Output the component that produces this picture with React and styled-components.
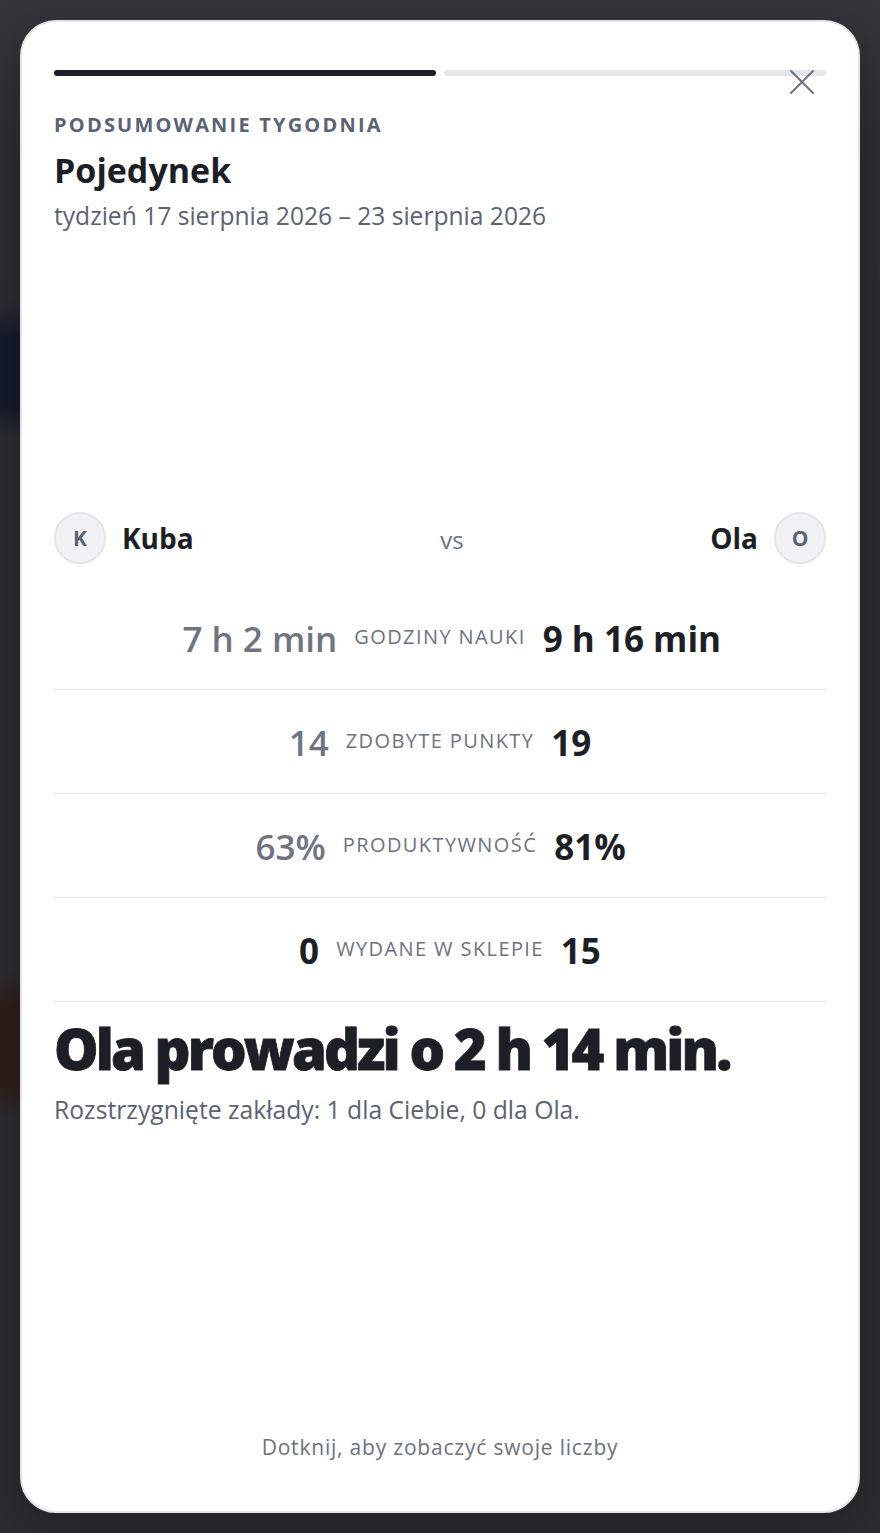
import React from 'react'
import styled, { createGlobalStyle } from 'styled-components'

const GlobalStyle = createGlobalStyle`
  html, body {
    margin: 0;
    padding: 0;
  }
  body {
    font-family: "Open Sans", "Noto Sans", "Liberation Sans", sans-serif;
    color: #1c1f26;
    background:
      linear-gradient(
        to bottom,
        transparent 300px,
        #151a2b 340px,
        #151a2b 405px,
        transparent 440px,
        transparent 970px,
        #2e1e1b 1005px,
        #2e1e1b 1085px,
        transparent 1120px
      ) left top / 20px 100% no-repeat,
      linear-gradient(to bottom, #34363b 0, #2b2d32 160px, #2a2c31 100%);
    min-height: 100vh;
  }
`

const Page = styled.div`
  padding: 20px;
`

const Card = styled.section`
  position: relative;
  box-sizing: border-box;
  width: 840px;
  height: 1493px;
  padding: 48px 32px 50px;
  display: flex;
  flex-direction: column;
  background: #fff;
  border: 2px solid #e3e5ea;
  border-radius: 36px;
  box-shadow: 0 10px 40px rgba(0, 0, 0, 0.25);
`

const Progress = styled.div`
  display: grid;
  grid-template-columns: 1fr 1fr;
  gap: 8px;
`

const Segment = styled.div`
  height: 6px;
  border-radius: 3px;
  background: ${p => (p.$done ? '#1d2027' : '#e4e6ea')};
`

const CloseButton = styled.button`
  position: absolute;
  top: 46px;
  right: 42px;
  width: 28px;
  height: 28px;
  padding: 0;
  border: 0;
  background: transparent;
  color: #6b7280;
  cursor: pointer;
  svg {
    display: block;
  }
`

const Eyebrow = styled.div`
  margin-top: 36px;
  font-size: 20px;
  line-height: 26px;
  font-weight: 700;
  letter-spacing: 2.2px;
  text-transform: uppercase;
  color: #5a6372;
`

const Title = styled.h1`
  margin: 11px 0 0;
  font-size: 34px;
  line-height: 42px;
  font-weight: 700;
  color: #1c1f26;
`

const Dates = styled.div`
  margin-top: 9px;
  font-size: 24.6px;
  line-height: 32px;
  color: #5a6372;
`

const Players = styled.div`
  margin-top: 280px;
  display: flex;
  align-items: center;
  justify-content: space-between;
`

const Player = styled.div`
  display: flex;
  align-items: center;
  gap: 16px;
  flex-direction: ${p => (p.$right ? 'row-reverse' : 'row')};
`

const Avatar = styled.div`
  box-sizing: border-box;
  width: 52px;
  height: 52px;
  border-radius: 50%;
  background: #f1f2f5;
  border: 2px solid #e3e5ea;
  display: flex;
  align-items: center;
  justify-content: center;
  font-size: 21px;
  font-weight: 700;
  color: #5a6372;
`

const Name = styled.span`
  font-size: 28px;
  line-height: 36px;
  font-weight: 700;
  color: #1c1f26;
`

const Versus = styled.span`
  font-size: 24px;
  color: #6b7280;
  padding-top: 2px;
`

const Stats = styled.div`
  margin-top: 22px;
`

const StatRow = styled.div`
  display: grid;
  grid-template-columns: 1fr auto 1fr;
  align-items: center;
  column-gap: 17px;
  padding: 31px 0 28px;
  border-bottom: 1px solid #e4e6ea;
`

const Value = styled.span`
  font-size: 35px;
  line-height: 44px;
  font-weight: ${p => (p.$muted ? 600 : 700)};
  color: ${p => (p.$muted ? '#6e7582' : '#1c1f26')};
  text-align: ${p => (p.$align === 'right' ? 'right' : 'left')};
  white-space: nowrap;
`

const Label = styled.span`
  font-size: 20px;
  line-height: 24px;
  letter-spacing: 1.4px;
  text-transform: uppercase;
  color: #6b7280;
  padding-bottom: 4px;
  white-space: nowrap;
`

const Verdict = styled.h2`
  margin: 14px 0 0;
  font-size: 56px;
  line-height: 64px;
  font-weight: 800;
  letter-spacing: -2.9px;
  -webkit-text-stroke: 0.8px #1c1f26;
  color: #1c1f26;
`

const Bets = styled.p`
  margin: 14px 0 0;
  font-size: 24.7px;
  line-height: 32px;
  color: #5a6372;
`

const Hint = styled.div`
  margin-top: auto;
  text-align: center;
  font-size: 21px;
  line-height: 28px;
  letter-spacing: 0.8px;
  color: #6b7280;
`

const stats = [
  { label: 'Godziny nauki', me: '7 h 2 min', them: '9 h 16 min', meMuted: true },
  { label: 'Zdobyte punkty', me: '14', them: '19', meMuted: true },
  { label: 'Produktywność', me: '63%', them: '81%', meMuted: true },
  { label: 'Wydane w sklepie', me: '0', them: '15', meMuted: false },
]

function CloseIcon() {
  return (
    <svg width="28" height="28" viewBox="0 0 28 28" fill="none" stroke="currentColor" strokeWidth="2" strokeLinecap="round">
      <path d="M3 3l22 22M25 3L3 25" />
    </svg>
  )
}

export default function App() {
  return (
    <Page>
      <GlobalStyle />
      <Card>
        <Progress>
          <Segment $done />
          <Segment />
        </Progress>
        <CloseButton aria-label="Zamknij">
          <CloseIcon />
        </CloseButton>

        <Eyebrow>Podsumowanie tygodnia</Eyebrow>
        <Title>Pojedynek</Title>
        <Dates>tydzień 17 sierpnia 2026 – 23 sierpnia 2026</Dates>

        <Players>
          <Player>
            <Avatar>K</Avatar>
            <Name>Kuba</Name>
          </Player>
          <Versus>vs</Versus>
          <Player $right>
            <Avatar>O</Avatar>
            <Name>Ola</Name>
          </Player>
        </Players>

        <Stats>
          {stats.map(s => (
            <StatRow key={s.label}>
              <Value $align="right" $muted={s.meMuted}>{s.me}</Value>
              <Label>{s.label}</Label>
              <Value>{s.them}</Value>
            </StatRow>
          ))}
        </Stats>

        <Verdict>Ola prowadzi o 2 h 14 min.</Verdict>
        <Bets>Rozstrzygnięte zakłady: 1 dla Ciebie, 0 dla Ola.</Bets>

        <Hint>Dotknij, aby zobaczyć swoje liczby</Hint>
      </Card>
    </Page>
  )
}
